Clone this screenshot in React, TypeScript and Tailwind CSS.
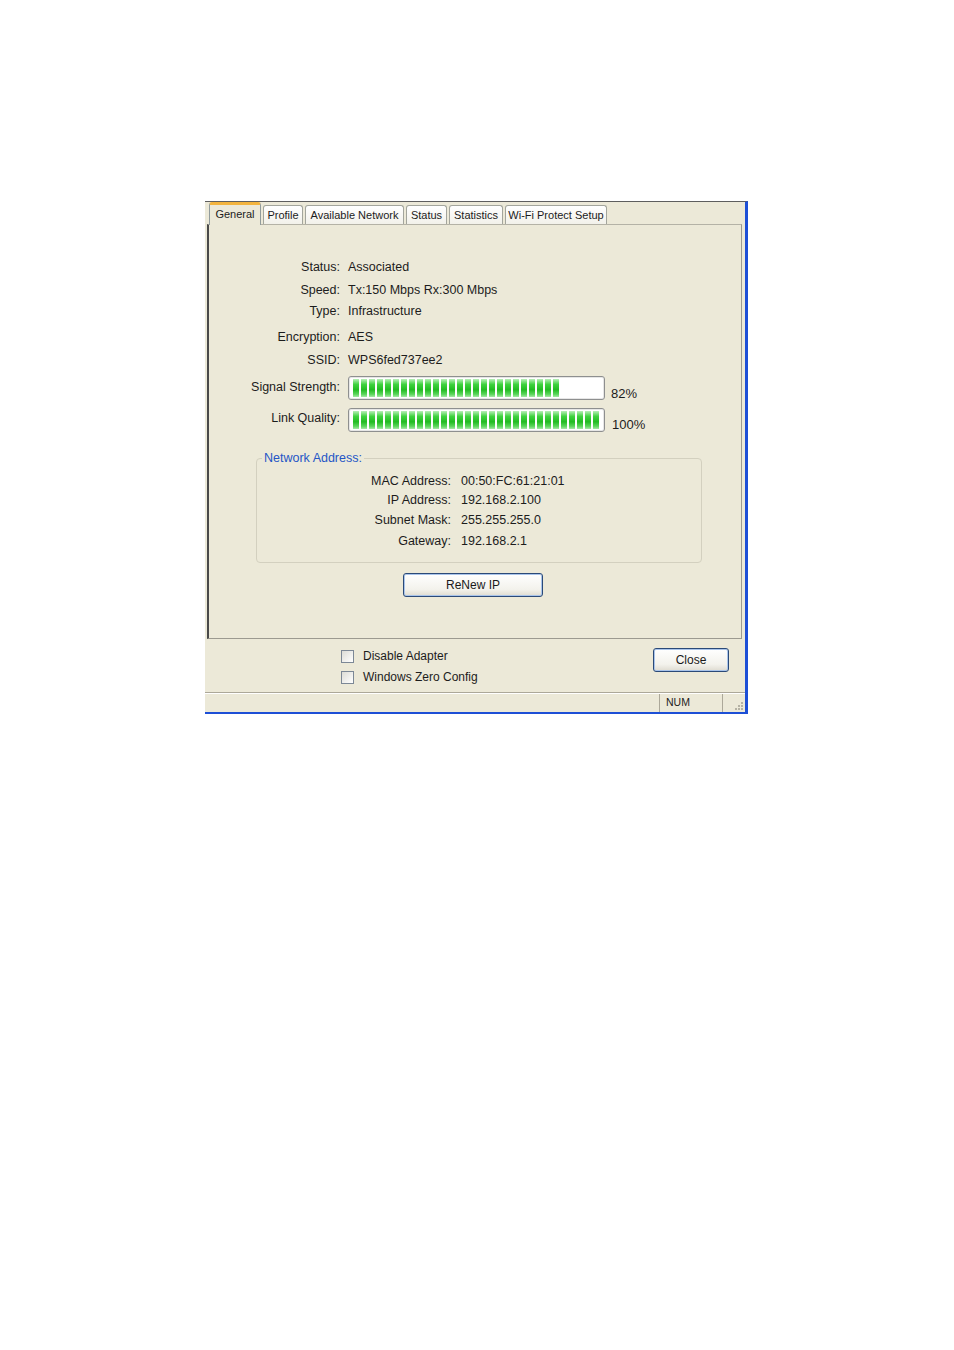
import React from "react";

const tabs = [
  { label: "General", cls: "w-[52px]", active: true },
  { label: "Profile", cls: "w-[40px]", active: false },
  { label: "Available Network", cls: "w-[99px]", active: false },
  { label: "Status", cls: "w-[41px]", active: false },
  { label: "Statistics", cls: "w-[54px]", active: false },
  { label: "Wi-Fi Protect Setup", cls: "w-[102px]", active: false },
];

function InfoRow({ label, value, cls }: { label: string; value: string; cls: string }) {
  return (
    <div className={"flex h-[20px] items-center " + cls}>
      <span className="w-[131px] text-right">{label}</span>
      <span className="ml-[8px]">{value}</span>
    </div>
  );
}

function Bar({ blocks }: { blocks: number }) {
  return (
    <div className="flex h-[24px] w-[257px] items-center gap-[2px] rounded-[3px] border border-[#8e8f8f] bg-white pl-[4px] shadow-[inset_0_0_0_1px_#e6e6e6]">
      {Array.from({ length: blocks }).map((_, i) => (
        <div
          key={i}
          className="h-[18px] w-[6px] bg-[linear-gradient(to_bottom,#b9efb9,#3fd23f_30%,#22bb22_60%,#5cd65c_85%,#a6e8a6)]"
        />
      ))}
    </div>
  );
}

function GroupRow({ label, value, cls }: { label: string; value: string; cls: string }) {
  return (
    <div className={"flex h-[20px] items-center " + cls}>
      <span className="w-[194px] text-right">{label}</span>
      <span className="ml-[10px]">{value}</span>
    </div>
  );
}

function XPButton({ label, cls }: { label: string; cls: string }) {
  return (
    <div
      className={
        "flex items-center justify-center rounded-[3px] border border-[#2b4a78] bg-[linear-gradient(to_bottom,#ffffff,#f3f2ec_70%,#dedbd0)] text-[12px] text-[#1a1a1a] shadow-[inset_0_0_0_1px_#a9c4ea] " +
        cls
      }
    >
      {label}
    </div>
  );
}

function CheckRow({ label, cls }: { label: string; cls: string }) {
  return (
    <div className={"flex h-[14px] items-center " + cls}>
      <div className="h-[13px] w-[13px] border border-[#7c8896] bg-[linear-gradient(135deg,#dcdcd6,#ffffff)]" />
      <span className="ml-[9px] text-[12px]">{label}</span>
    </div>
  );
}

export default function App() {
  return (
    <div className="h-[1350px] w-[954px] bg-white pl-[205px] pt-[201px] font-['Liberation_Sans',Arial,sans-serif] text-[#1c1c1c]">
      <div className="flex h-[513px] w-[543px] flex-col border-t border-r-[3px] border-b-2 border-t-[#5e5e5e] border-r-[#1d4fd6] border-b-[#1d4fd6] bg-[#ece9d8]">
        {/* Tabs */}
        <div className="relative z-10 -mb-px flex h-[23px] items-end gap-[2px] pl-[4px] text-[11px]">
          {tabs.map((t) =>
            t.active ? (
              <div
                key={t.label}
                className={
                  "flex h-[23px] items-center justify-center rounded-t-[3px] border border-b-0 border-t-[3px] border-[#919b9c] border-t-[#f3b43e] bg-[#ece9d8] pb-[2px] " +
                  t.cls
                }
              >
                {t.label}
              </div>
            ) : (
              <div
                key={t.label}
                className={
                  "mb-px flex h-[19px] items-center justify-center rounded-t-[3px] border border-b-0 border-[#a3a59c] bg-[linear-gradient(to_bottom,#ffffff,#f2f1ea)] " +
                  t.cls
                }
              >
                {t.label}
              </div>
            )
          )}
        </div>

        {/* Panel */}
        <div className="ml-[2px] flex h-[415px] w-[535px] flex-col border-t border-r border-b border-l-2 border-t-[#b4b2a6] border-r-[#9c9a90] border-b-[#9c9a90] border-l-[#4a4a4a] pt-[32px] text-[12.5px]">
          <InfoRow label="Status:" value="Associated" cls="" />
          <InfoRow label="Speed:" value="Tx:150 Mbps Rx:300 Mbps" cls="mt-[3px]" />
          <InfoRow label="Type:" value="Infrastructure" cls="mt-[1px]" />
          <InfoRow label="Encryption:" value="AES" cls="mt-[6px]" />
          <InfoRow label="SSID:" value="WPS6fed737ee2" cls="mt-[3px]" />

          <div className="mt-[6px] flex items-start">
            <span className="mt-[1px] flex h-[20px] w-[131px] items-center justify-end">Signal Strength:</span>
            <div className="ml-[8px]">
              <Bar blocks={26} />
            </div>
            <span className="ml-[6px] mt-[8px] flex h-[20px] items-center text-[13px]">82%</span>
          </div>

          <div className="mt-[4px] flex items-start">
            <span className="flex h-[20px] w-[131px] items-center justify-end">Link Quality:</span>
            <div className="ml-[8px]">
              <Bar blocks={31} />
            </div>
            <span className="ml-[7px] mt-[7px] flex h-[20px] items-center text-[13px]">100%</span>
          </div>

          {/* Group box */}
          <div className="relative ml-[47px] mt-[23px] h-[105px] w-[446px] rounded-[4px] border border-[#d3d0bf] pt-[12px]">
            <span className="absolute -top-[10px] left-[5px] bg-[#ece9d8] px-[2px] leading-[18px] text-[#2556c6]">
              Network Address:
            </span>
            <GroupRow label="MAC Address:" value="00:50:FC:61:21:01" cls="" />
            <GroupRow label="IP Address:" value="192.168.2.100" cls="-mt-[1px]" />
            <GroupRow label="Subnet Mask:" value="255.255.255.0" cls="" />
            <GroupRow label="Gateway:" value="192.168.2.1" cls="mt-[1px]" />
          </div>

          <div className="ml-[194px] mt-[10px]">
            <XPButton label="ReNew IP" cls="h-[24px] w-[140px]" />
          </div>
        </div>

        {/* Bottom area */}
        <div className="flex h-[53px]">
          <div className="ml-[136px] flex flex-col pt-[10px]">
            <CheckRow label="Disable Adapter" cls="" />
            <CheckRow label="Windows Zero Config" cls="mt-[7px]" />
          </div>
          <div className="ml-auto mr-[16px] mt-[9px]">
            <XPButton label="Close" cls="h-[24px] w-[76px]" />
          </div>
        </div>

        {/* Separator */}
        <div className="h-[2px] border-t border-b border-t-[#aca899] border-b-white" />

        {/* Status bar */}
        <div className="flex h-[18px] items-stretch justify-end text-[10.5px]">
          <div className="flex w-[64px] items-center border-l border-r border-l-[#aca899] border-r-[#aca899] pl-[6px]">
            NUM
          </div>
          <div className="relative w-[22px]">
            <div className="absolute bottom-[2px] right-[2px] grid grid-cols-3 gap-[1px]">
              <span className="h-[2px] w-[2px]" />
              <span className="h-[2px] w-[2px]" />
              <span className="h-[2px] w-[2px] bg-[#b5b2a4]" />
              <span className="h-[2px] w-[2px]" />
              <span className="h-[2px] w-[2px] bg-[#b5b2a4]" />
              <span className="h-[2px] w-[2px] bg-[#b5b2a4]" />
              <span className="h-[2px] w-[2px] bg-[#b5b2a4]" />
              <span className="h-[2px] w-[2px] bg-[#b5b2a4]" />
              <span className="h-[2px] w-[2px] bg-[#b5b2a4]" />
            </div>
          </div>
        </div>
      </div>
    </div>
  );
}
